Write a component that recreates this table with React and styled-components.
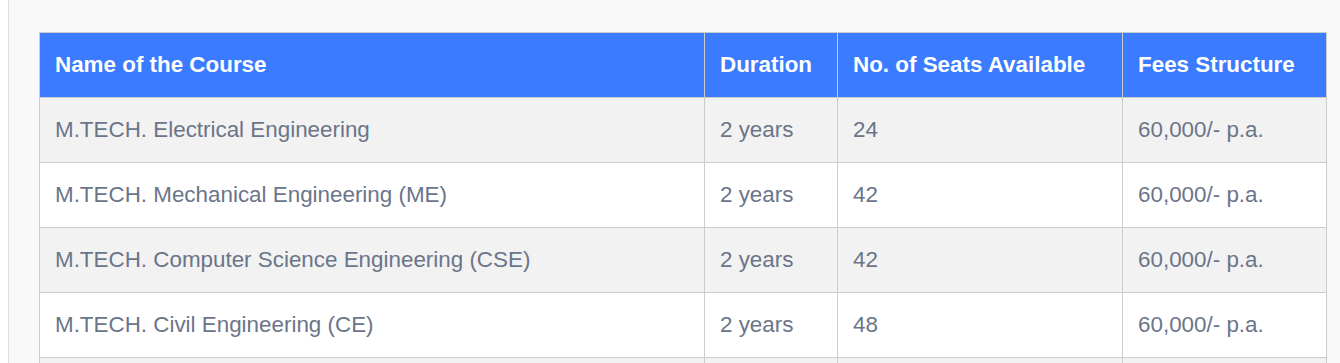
import React from 'react';
import styled, { createGlobalStyle } from 'styled-components';

const GlobalStyle = createGlobalStyle`
  html, body {
    margin: 0;
    padding: 0;
    background: #ffffff;
    font-family: "Liberation Sans", Arial, sans-serif;
  }
`;

const Panel = styled.div`
  margin-left: 8px;
  min-height: 363px;
  box-sizing: border-box;
  border-left: 1px solid #dcdcdc;
  background: #f8f8f8;
  padding: 32px 13px 0 30px;
`;

const Table = styled.table`
  width: 1287px;
  border-collapse: collapse;
  table-layout: fixed;
  font-size: 22.4px;
`;

const HeadCell = styled.th`
  background: #3a7bff;
  color: #ffffff;
  font-weight: 700;
  text-align: left;
  height: 64px;
  padding: 0 15px;
  border: 1px solid #cccccc;
`;

const Row = styled.tr`
  background: ${({ striped }) => (striped ? '#f2f2f2' : '#ffffff')};
`;

const Cell = styled.td`
  color: #6b7589;
  height: 64px;
  padding: 0 15px;
  border: 1px solid #cccccc;
  white-space: nowrap;
`;

const columns = [
  { label: 'Name of the Course', width: 665 },
  { label: 'Duration', width: 133 },
  { label: 'No. of Seats Available', width: 285 },
  { label: 'Fees Structure', width: 204 },
];

const courses = [
  ['M.TECH. Electrical Engineering', '2 years', '24', '60,000/- p.a.'],
  ['M.TECH. Mechanical Engineering (ME)', '2 years', '42', '60,000/- p.a.'],
  ['M.TECH. Computer Science Engineering (CSE)', '2 years', '42', '60,000/- p.a.'],
  ['M.TECH. Civil Engineering (CE)', '2 years', '48', '60,000/- p.a.'],
  ['M.TECH. Electronics & Communication Engineering (ECE)', '2 years', '24', '60,000/- p.a.'],
];

export default function App() {
  return (
    <>
      <GlobalStyle />
      <Panel>
        <Table>
          <colgroup>
            {columns.map((c) => (
              <col key={c.label} style={{ width: c.width }} />
            ))}
          </colgroup>
          <thead>
            <tr>
              {columns.map((c) => (
                <HeadCell key={c.label}>{c.label}</HeadCell>
              ))}
            </tr>
          </thead>
          <tbody>
            {courses.map((row, i) => (
              <Row key={row[0]} striped={i % 2 === 0}>
                {row.map((v, j) => (
                  <Cell key={j}>{v}</Cell>
                ))}
              </Row>
            ))}
          </tbody>
        </Table>
      </Panel>
    </>
  );
}
